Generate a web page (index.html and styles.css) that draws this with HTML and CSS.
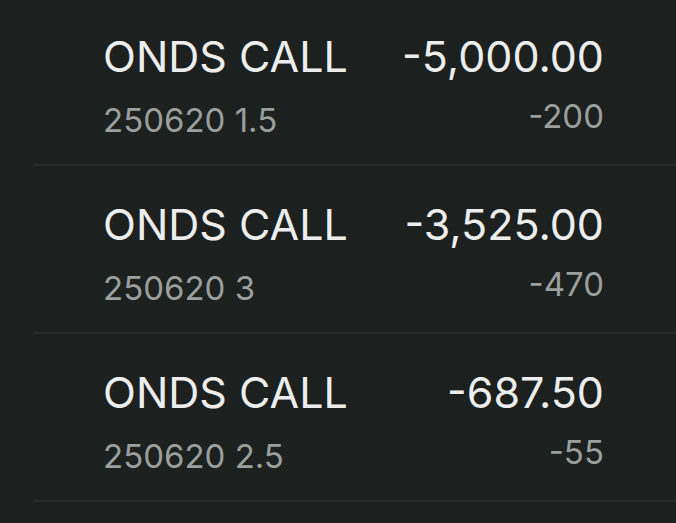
FILE: index.html
```html
<!DOCTYPE html>
<html>
<head>
<meta charset="utf-8">
<link rel="stylesheet" href="styles.css">
</head>
<body>
<div class="list">
  <div class="row">
    <div class="col left">
      <div class="title">ONDS CALL</div>
      <div class="sub sub-left">250620 1.5</div>
    </div>
    <div class="col right">
      <div class="title">-5,000.00</div>
      <div class="sub sub-right">-200</div>
    </div>
  </div>
  <div class="row">
    <div class="col left">
      <div class="title">ONDS CALL</div>
      <div class="sub sub-left">250620 3</div>
    </div>
    <div class="col right">
      <div class="title">-3,525.00</div>
      <div class="sub sub-right">-470</div>
    </div>
  </div>
  <div class="row">
    <div class="col left">
      <div class="title">ONDS CALL</div>
      <div class="sub sub-left">250620 2.5</div>
    </div>
    <div class="col right">
      <div class="title">-687.50</div>
      <div class="sub sub-right">-55</div>
    </div>
  </div>
</div>
</body>
</html>
```
FILE: styles.css
```css
html, body {
  margin: 0;
  padding: 0;
  background: #1c201f;
  width: 676px;
  height: 523px;
  overflow: hidden;
}
body {
  font-family: "Inter", "Liberation Sans", sans-serif;
}
.list {
  margin-top: -2px;
  margin-left: 33px;
}
.row {
  display: flex;
  justify-content: space-between;
  align-items: flex-start;
  height: 166px;
  padding: 0 72px 0 70px;
  border-bottom: 2px solid #262a29;
}
.col {
  display: flex;
  flex-direction: column;
}
.right {
  align-items: flex-end;
}
.title {
  font-size: 43px;
  line-height: 52px;
  color: #eceeed;
  margin-top: 32px;
}
.sub {
  font-size: 33px;
  line-height: 40px;
  color: #9a9e9d;
}
.sub-left {
  margin-top: 18px;
}
.sub-right {
  margin-top: 14px;
}
```
